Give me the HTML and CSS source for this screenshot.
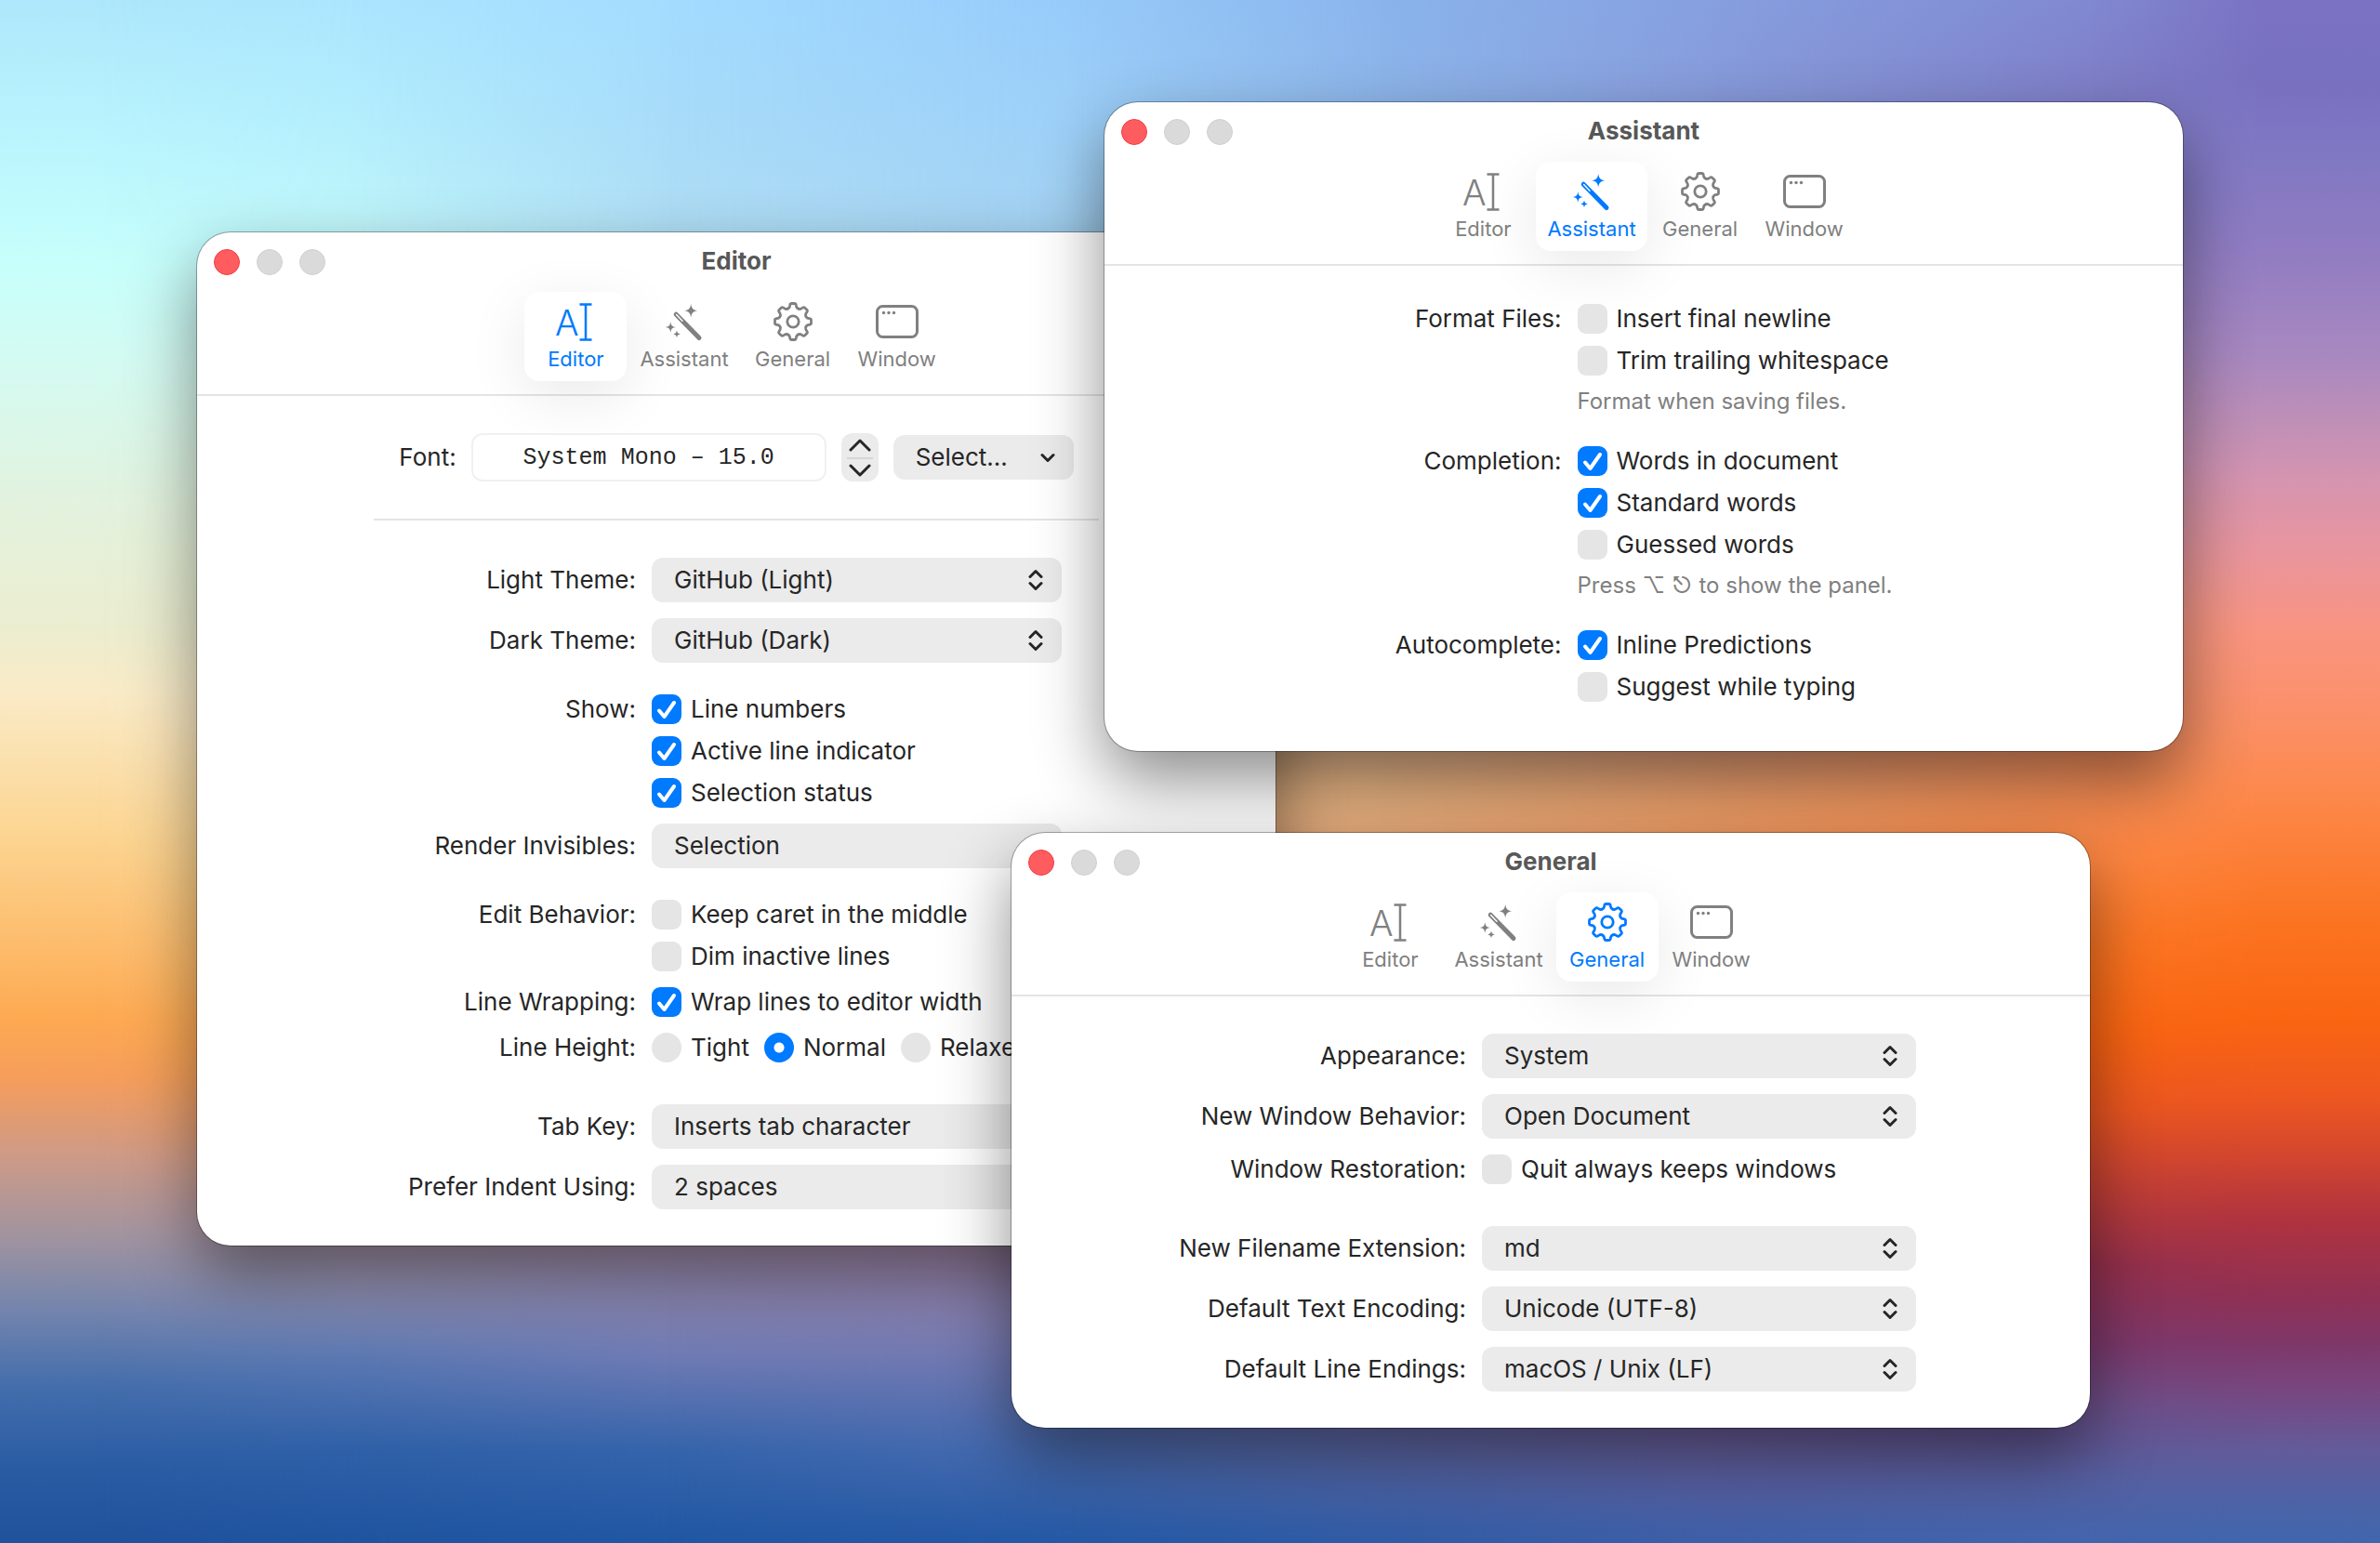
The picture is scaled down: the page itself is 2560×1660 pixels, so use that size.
FILE: index.html
```html
<!DOCTYPE html>
<html lang="en">
<head>
<meta charset="utf-8">
<meta name="viewport" content="width=device-width, initial-scale=1">
<title>Settings</title>
<link rel="stylesheet" href="styles.css">
</head>
<body>
<svg class="sprite" aria-hidden="true">
  <symbol id="icon-beam" viewBox="0 0 44 44">
    <path d="M26.500 3.500h13M26.500 41.500h13M33 3.500v38" fill="none" stroke="currentColor" stroke-width="2.500"/>
  </symbol>
  <symbol id="icon-wand" viewBox="0 0 44 44">
    <path d="M13.200 14.200 38 39.500" fill="none" stroke="currentColor" stroke-width="5" stroke-linecap="round"/>
    <path class="wand-tip" d="M13.600 14.600 20 21.200" fill="none" stroke-width="1.400" stroke-linecap="round"/>
    <path fill="currentColor" d="M29.200 3c.8 5 2.300 6.500 7.200 7.300-4.900.8-6.400 2.300-7.200 7.200-.8-4.900-2.300-6.400-7.200-7.200C26.900 9.500 28.400 8 29.200 3zM7.300 22.200c.6 4 1.800 5.200 5.700 5.800-3.900.6-5.100 1.800-5.700 5.800-.6-4-1.800-5.200-5.700-5.800 3.900-.6 5.100-1.800 5.700-5.800zM14 31.600c.5 2.600 1.200 3.300 3.800 3.800-2.600.5-3.300 1.200-3.800 3.800-.5-2.600-1.200-3.300-3.800-3.800 2.600-.5 3.300-1.200 3.800-3.800z"/>
  </symbol>
  <symbol id="icon-gear" viewBox="-22 -22 44 44">
    <g fill="none" stroke="currentColor" stroke-width="2.800" stroke-linecap="round">
      <path id="tooth" d="M-5.740-13.860C-4.900-14.200-4-14.600-3.700-15.900L-3.300-17.800Q-3-19.500-1.500-19.500H1.500Q3-19.500 3.300-17.800L3.700-15.900C4-14.600 4.900-14.200 5.740-13.860"/>
      <use href="#tooth" transform="rotate(45)"/>
      <use href="#tooth" transform="rotate(90)"/>
      <use href="#tooth" transform="rotate(135)"/>
      <use href="#tooth" transform="rotate(180)"/>
      <use href="#tooth" transform="rotate(225)"/>
      <use href="#tooth" transform="rotate(270)"/>
      <use href="#tooth" transform="rotate(315)"/>
      <circle r="6.200"/>
    </g>
  </symbol>
  <symbol id="icon-window" viewBox="0 0 48 44">
    <rect x="2.500" y="5.500" width="43" height="33" rx="6" fill="none" stroke="currentColor" stroke-width="3"/>
    <g fill="currentColor"><circle cx="9.500" cy="12.500" r="1.700"/><circle cx="15" cy="12.500" r="1.700"/><circle cx="20.500" cy="12.500" r="1.700"/></g>
  </symbol>
  <symbol id="icon-updown" viewBox="0 0 16 24">
    <path d="M2 8.500 8 2.500l6 6M2 15.500l6 6 6-6" fill="none" stroke="currentColor" stroke-width="3" stroke-linecap="round" stroke-linejoin="round"/>
  </symbol>
  <symbol id="icon-down" viewBox="0 0 16 24">
    <path d="M2 9.500l6 6 6-6" fill="none" stroke="currentColor" stroke-width="3" stroke-linecap="round" stroke-linejoin="round"/>
  </symbol>
  <symbol id="icon-step-up" viewBox="0 0 24 14">
    <path d="M2 12 12 2l10 10" fill="none" stroke="currentColor" stroke-width="3" stroke-linecap="round" stroke-linejoin="round"/>
  </symbol>
  <symbol id="icon-step-down" viewBox="0 0 24 14">
    <path d="M2 2l10 10L22 2" fill="none" stroke="currentColor" stroke-width="3" stroke-linecap="round" stroke-linejoin="round"/>
  </symbol>
</svg>

<main class="desktop">
  <div class="wallpaper" aria-hidden="true">
    <div class="band band-1"></div>
    <div class="band band-2"></div>
    <div class="band band-3"></div>
    <div class="band band-4"></div>
    <div class="band band-5"></div>
    <div class="band band-6"></div>
    <div class="band band-7"></div>
    <div class="band band-8"></div>
  </div>

  <section class="window window-editor" aria-labelledby="title-editor">
    <header class="window-header">
      <div class="titlebar">
        <div class="lights">
          <button type="button" class="light light-close" aria-label="Close"></button>
          <button type="button" class="light" aria-label="Minimize" disabled></button>
          <button type="button" class="light" aria-label="Zoom" disabled></button>
        </div>
        <h2 class="title" id="title-editor">Editor</h2>
      </div>
      <nav class="tabs">
        <button type="button" class="tab tab-active"><svg class="tab-icon" viewBox="-2 0 48 44" aria-hidden="true"><text x="0" y="37" class="icon-letter">A</text><use href="#icon-beam" width="44" height="44"/></svg>Editor</button>
        <button type="button" class="tab"><svg class="tab-icon"><use href="#icon-wand"/></svg>Assistant</button>
        <button type="button" class="tab"><svg class="tab-icon"><use href="#icon-gear"/></svg>General</button>
        <button type="button" class="tab"><svg class="tab-icon"><use href="#icon-window"/></svg>Window</button>
      </nav>
    </header>
    <div class="window-body">
      <div class="font-row">
        <label for="font">Font:</label>
        <input class="font-field" id="font" type="text" value="System Mono – 15.0" readonly>
        <div class="stepper">
          <button type="button" class="step" aria-label="Larger"><svg class="step-icon"><use href="#icon-step-up"/></svg></button>
          <button type="button" class="step" aria-label="Smaller"><svg class="step-icon"><use href="#icon-step-down"/></svg></button>
        </div>
        <div class="popup popup-small">
          <select aria-label="Select font"><option>Select…</option></select>
          <svg class="popup-icon"><use href="#icon-down"/></svg>
        </div>
      </div>
      <hr class="divider">
      <form class="form form-editor">
        <label class="label" for="light-theme">Light Theme:</label>
        <div class="popup"><select id="light-theme"><option>GitHub (Light)</option></select><svg class="popup-icon"><use href="#icon-updown"/></svg></div>
        <label class="label" for="dark-theme">Dark Theme:</label>
        <div class="popup"><select id="dark-theme"><option>GitHub (Dark)</option></select><svg class="popup-icon"><use href="#icon-updown"/></svg></div>

        <div class="label label-check group" id="show">Show:</div>
        <div class="checks group" role="group" aria-labelledby="show">
          <label class="choice"><input type="checkbox" checked>Line numbers</label>
          <label class="choice"><input type="checkbox" checked>Active line indicator</label>
          <label class="choice"><input type="checkbox" checked>Selection status</label>
        </div>
        <label class="label" for="invisibles">Render Invisibles:</label>
        <div class="popup"><select id="invisibles"><option>Selection</option></select><svg class="popup-icon"><use href="#icon-updown"/></svg></div>

        <div class="label label-check group" id="behavior">Edit Behavior:</div>
        <div class="checks group" role="group" aria-labelledby="behavior">
          <label class="choice"><input type="checkbox">Keep caret in the middle</label>
          <label class="choice"><input type="checkbox">Dim inactive lines</label>
        </div>
        <div class="label label-check" id="wrapping">Line Wrapping:</div>
        <div class="checks" role="group" aria-labelledby="wrapping">
          <label class="choice"><input type="checkbox" checked>Wrap lines to editor width</label>
        </div>
        <div class="label label-check" id="line-height">Line Height:</div>
        <div class="radios" role="radiogroup" aria-labelledby="line-height">
          <label class="choice"><input type="radio" name="line-height">Tight</label>
          <label class="choice"><input type="radio" name="line-height" checked>Normal</label>
          <label class="choice"><input type="radio" name="line-height">Relaxed</label>
        </div>

        <label class="label section" for="tab-key">Tab Key:</label>
        <div class="popup section"><select id="tab-key"><option>Inserts tab character</option></select><svg class="popup-icon"><use href="#icon-updown"/></svg></div>
        <label class="label" for="indent">Prefer Indent Using:</label>
        <div class="popup"><select id="indent"><option>2 spaces</option></select><svg class="popup-icon"><use href="#icon-updown"/></svg></div>
      </form>
    </div>
  </section>

  <section class="window window-assistant" aria-labelledby="title-assistant">
    <header class="window-header">
      <div class="titlebar">
        <div class="lights">
          <button type="button" class="light light-close" aria-label="Close"></button>
          <button type="button" class="light" aria-label="Minimize" disabled></button>
          <button type="button" class="light" aria-label="Zoom" disabled></button>
        </div>
        <h2 class="title" id="title-assistant">Assistant</h2>
      </div>
      <nav class="tabs">
        <button type="button" class="tab"><svg class="tab-icon" viewBox="-2 0 48 44" aria-hidden="true"><text x="0" y="37" class="icon-letter">A</text><use href="#icon-beam" width="44" height="44"/></svg>Editor</button>
        <button type="button" class="tab tab-active"><svg class="tab-icon"><use href="#icon-wand"/></svg>Assistant</button>
        <button type="button" class="tab"><svg class="tab-icon"><use href="#icon-gear"/></svg>General</button>
        <button type="button" class="tab"><svg class="tab-icon"><use href="#icon-window"/></svg>Window</button>
      </nav>
    </header>
    <div class="window-body">
      <form class="form form-assistant">
        <div class="label label-check" id="format">Format Files:</div>
        <div class="checks" role="group" aria-labelledby="format">
          <label class="choice"><input type="checkbox">Insert final newline</label>
          <label class="choice"><input type="checkbox">Trim trailing whitespace</label>
          <p class="note">Format when saving files.</p>
        </div>
        <div class="label label-check group" id="completion">Completion:</div>
        <div class="checks group" role="group" aria-labelledby="completion">
          <label class="choice"><input type="checkbox" checked>Words in document</label>
          <label class="choice"><input type="checkbox" checked>Standard words</label>
          <label class="choice"><input type="checkbox">Guessed words</label>
          <p class="note">Press ⌥ ⎋ to show the panel.</p>
        </div>
        <div class="label label-check group" id="autocomplete">Autocomplete:</div>
        <div class="checks group" role="group" aria-labelledby="autocomplete">
          <label class="choice"><input type="checkbox" checked>Inline Predictions</label>
          <label class="choice"><input type="checkbox">Suggest while typing</label>
        </div>
      </form>
    </div>
  </section>

  <section class="window window-general" aria-labelledby="title-general">
    <header class="window-header">
      <div class="titlebar">
        <div class="lights">
          <button type="button" class="light light-close" aria-label="Close"></button>
          <button type="button" class="light" aria-label="Minimize" disabled></button>
          <button type="button" class="light" aria-label="Zoom" disabled></button>
        </div>
        <h2 class="title" id="title-general">General</h2>
      </div>
      <nav class="tabs">
        <button type="button" class="tab"><svg class="tab-icon" viewBox="-2 0 48 44" aria-hidden="true"><text x="0" y="37" class="icon-letter">A</text><use href="#icon-beam" width="44" height="44"/></svg>Editor</button>
        <button type="button" class="tab"><svg class="tab-icon"><use href="#icon-wand"/></svg>Assistant</button>
        <button type="button" class="tab tab-active"><svg class="tab-icon"><use href="#icon-gear"/></svg>General</button>
        <button type="button" class="tab"><svg class="tab-icon"><use href="#icon-window"/></svg>Window</button>
      </nav>
    </header>
    <div class="window-body">
      <form class="form form-general">
        <label class="label" for="appearance">Appearance:</label>
        <div class="popup"><select id="appearance"><option>System</option></select><svg class="popup-icon"><use href="#icon-updown"/></svg></div>
        <label class="label" for="new-window">New Window Behavior:</label>
        <div class="popup"><select id="new-window"><option>Open Document</option></select><svg class="popup-icon"><use href="#icon-updown"/></svg></div>
        <div class="label label-check" id="restoration">Window Restoration:</div>
        <div class="checks" role="group" aria-labelledby="restoration">
          <label class="choice"><input type="checkbox">Quit always keeps windows</label>
        </div>
        <label class="label section" for="extension">New Filename Extension:</label>
        <div class="popup section"><select id="extension"><option>md</option></select><svg class="popup-icon"><use href="#icon-updown"/></svg></div>
        <label class="label" for="encoding">Default Text Encoding:</label>
        <div class="popup"><select id="encoding"><option>Unicode (UTF-8)</option></select><svg class="popup-icon"><use href="#icon-updown"/></svg></div>
        <label class="label" for="endings">Default Line Endings:</label>
        <div class="popup"><select id="endings"><option>macOS / Unix (LF)</option></select><svg class="popup-icon"><use href="#icon-updown"/></svg></div>
      </form>
    </div>
  </section>
</main>
</body>
</html>
```
FILE: styles.css
```css
:root {
  --accent: #007aff;
  --text: #262626;
  --muted: #808080;
  --control: #ebebeb;
  --box: #e5e5e5;
  --line: #e4e4e4;
}

* {
  box-sizing: border-box;
}

body {
  margin: 0;
  color: var(--text);
  font: 26px/32px Inter, "Liberation Sans", "DejaVu Sans", sans-serif;
}

button,
input,
select {
  margin: 0;
  padding: 0;
  border: 0;
  color: inherit;
  font: inherit;
  appearance: none;
}

.sprite {
  position: absolute;
  width: 0;
  height: 0;
}

.desktop {
  position: relative;
  min-height: 100vh;
  overflow: hidden;
}

/* Wallpaper: vertical colour ramps, each fading in over the one to its left */
.wallpaper,
.band {
  position: absolute;
  inset: 0;
}

.band-1 {
  background: linear-gradient(#aee7fb, #baf5fe 9%, #c6fffb 17%, #d3fbf3 23%, #e3f2dd 33%, #ecedcf 41%, #faeac6 45%, #fcd592 54%, #fdb968 62%, #fda952 66%, #f59d5c 70%, #cd9a88 75%, #a2949f 80%, #7384ad 85%, #436dac 90%, #2a5ca4 95%, #20529c);
}

.band-2 {
  background: linear-gradient(#aae5fe, #b4eefd 8%, #bff6fa 15%, #d3fbf3 23%, #e3f2dd 33%, #ecedcf 41%, #faeac6 47%, #fcd592 56%, #fdb968 64%, #fda952 68%, #e59d6c 73%, #b798a0 78%, #9390b0 83%, #5b78b2 88%, #2f60a8 94%, #1f549f);
  mask-image: linear-gradient(90deg, transparent 4%, #000 15%);
}

.band-3 {
  background: linear-gradient(#a3dcff, #a8dcf9 8%, #b0def5 15%, #e3e2cd 40%, #fcc592 60%, #c79aa0 76%, #9088b0 83%, #6e7ab4 88%, #3564ab 94%, #2057a3);
  mask-image: linear-gradient(90deg, transparent 15%, #000 28%);
}

.band-4 {
  background: linear-gradient(#97cbfa, #9dd0f8 8%, #a4d2f2 15%, #d3cfc0 35%, #e8bd8d 50%, #e0a080 65%, #a888a8 80%, #7f7cb0 86%, #486bb0 94%, #2458a4);
  mask-image: linear-gradient(90deg, transparent 28%, #000 45%);
}

.band-5 {
  background: linear-gradient(#8ab4ec, #8fb6e8 10%, #c8b0b8 35%, #e8b483 51%, #e68c60 65%, #a070a0 82%, #5a67a6 94%, #2f5ba5);
  mask-image: linear-gradient(90deg, transparent 45%, #000 58%);
}

.band-6 {
  background: linear-gradient(#869fdf, #8898d8 10%, #c098b0 35%, #ed9f69 52%, #f07a40 65%, #944a70 82%, #66609f 94%, #3c5fa8);
  mask-image: linear-gradient(90deg, transparent 58%, #000 72%);
}

.band-7 {
  background: linear-gradient(#8089d0, #7f80c9 5%, #817ac4 12%, #9780bf 20%, #c490b2 30%, #ee947f 40%, #f58f5a 50%, #fb8540 56%, #fb7320 62%, #f86412 67%, #e85520 72%, #c03f35 77%, #93304c 82%, #7b386a 87%, #6b4f88 91%, #5560a2 96%, #4265ad);
  mask-image: linear-gradient(90deg, transparent 72%, #000 88%);
}

.band-8 {
  background: linear-gradient(#7b72c4, #7870c0 5%, #8078c3 10%, #907cc2 16%, #a888c0 23%, #bd8fb8 27%, #d594b0 31%, #ea959d 36%, #f99480 41%, #fb8f65 47%, #fd8748 52%, #fb7320 60%, #fa6512 66%, #ee5820 71%, #d2452f 75%, #b0333f 79%, #903054 84%, #7f3769 87%, #78467f 90%, #635b9a 94%, #4f62a5 97%, #3f66ae);
  mask-image: linear-gradient(90deg, transparent 88%, #000 95%);
}

/* Windows sit freely on the desktop */
.window {
  position: absolute;
  width: 1160px;
  border-radius: 36px;
  background: #fff;
  box-shadow: 0 0 0 1px rgba(0, 0, 0, .3), 0 32px 72px rgba(0, 0, 0, .45);
}

.window-editor {
  left: 212px;
  top: 250px;
}

.window-assistant {
  left: 1188px;
  top: 110px;
}

.window-general {
  left: 1088px;
  top: 896px;
}

.window-header {
  padding-bottom: 14px;
  border-bottom: 2px solid var(--line);
}

.titlebar {
  display: grid;
  grid-template-columns: 1fr auto 1fr;
  align-items: center;
  height: 64px;
  padding: 0 18px;
}

.lights {
  display: flex;
  gap: 18px;
}

.light {
  width: 28px;
  height: 28px;
  border: 1px solid #d0d0d0;
  border-radius: 50%;
  background: #dadada;
}

.light-close {
  border-color: #f43b40;
  background: #ff5c60;
}

.title {
  margin: 0;
  padding-bottom: 2px;
  color: #585858;
  font-size: 26px;
  font-weight: 700;
  line-height: 32px;
}

.tabs {
  display: flex;
  justify-content: center;
  gap: 2px;
}

.tab {
  display: flex;
  flex-direction: column;
  align-items: center;
  gap: 4px;
  min-width: 110px;
  height: 96px;
  padding: 10px 12px 0;
  border-radius: 16px;
  background: transparent;
  color: var(--muted);
  font-size: 22px;
  line-height: 28px;
}

.tab-active {
  background: #fff;
  box-shadow: 0 16px 64px rgba(0, 0, 0, .09);
  color: var(--accent);
}

.tab-icon {
  width: 48px;
  height: 44px;
  overflow: visible;
}

.icon-letter {
  fill: currentColor;
  font-family: Inter, sans-serif;
  font-size: 38px;
  font-weight: 300;
}

.wand-tip {
  stroke: #fff;
}

.window-body {
  padding: 40px 40px 39px;
}

.font-row {
  display: flex;
  align-items: center;
  justify-content: center;
  gap: 16px;
}

.font-field {
  width: 382px;
  height: 52px;
  border: 2px solid #f0f0f0;
  border-radius: 12px;
  background: #fff;
  font: 25px/32px "Liberation Mono", monospace;
  text-align: center;
}

.stepper {
  display: grid;
  grid-template-rows: 1fr 1fr;
  width: 40px;
  height: 52px;
  border-radius: 12px;
  background: var(--control);
}

.step {
  display: grid;
  place-items: center;
  background: transparent;
}

.step + .step {
  margin: 0 6px;
  border-top: 2px solid #d6d6d6;
}

.step-icon {
  width: 24px;
  height: 14px;
}

.divider {
  width: 780px;
  height: 2px;
  margin: 40px auto;
  border: 0;
  background: var(--line);
}

.form {
  display: grid;
  justify-content: center;
  gap: 17px;
}

.form-editor {
  grid-template-columns: 242px 441px;
}

.form-assistant {
  grid-template-columns: 175px 335px;
  padding: 1px 0 14px;
}

.form-general {
  grid-template-columns: 302px 467px;
}

.label {
  display: flex;
  justify-content: flex-end;
  line-height: 48px;
  white-space: nowrap;
}

.label-check {
  line-height: 32px;
}

.group {
  margin-top: 17px;
}

.section {
  margin-top: 28px;
}

.popup {
  display: grid;
  align-items: center;
  height: 48px;
  border-radius: 12px;
  background: var(--control);
}

.popup-small {
  width: 194px;
}

.popup select,
.popup-icon {
  grid-area: 1 / 1;
}

.popup select {
  width: 100%;
  height: 48px;
  padding: 0 24px;
  border-radius: 12px;
  background: transparent;
}

.popup-icon {
  justify-self: end;
  width: 16px;
  height: 24px;
  margin-right: 20px;
  pointer-events: none;
}

.checks {
  display: flex;
  flex-direction: column;
  align-items: flex-start;
  gap: 13px;
}

.radios {
  display: flex;
  gap: 16px;
}

.choice {
  display: flex;
  align-items: center;
  gap: 10px;
  white-space: nowrap;
}

.choice input {
  width: 32px;
  height: 32px;
  border-radius: 9px;
  background: var(--box);
}

.choice input:checked {
  background: var(--accent) url("data:image/svg+xml,%3Csvg xmlns='http://www.w3.org/2000/svg' viewBox='0 0 32 32'%3E%3Cpath d='M8 17.500l5.500 6.500L24 9' fill='none' stroke='%23fff' stroke-width='4' stroke-linecap='round' stroke-linejoin='round'/%3E%3C/svg%3E");
}

.choice input[type="radio"] {
  border-radius: 50%;
}

.choice input[type="radio"]:checked {
  background: radial-gradient(circle, #fff 5px, var(--accent) 6px);
}

.note {
  margin: 0;
  color: var(--muted);
  font-size: 24px;
  line-height: 29px;
  white-space: nowrap;
}
```
